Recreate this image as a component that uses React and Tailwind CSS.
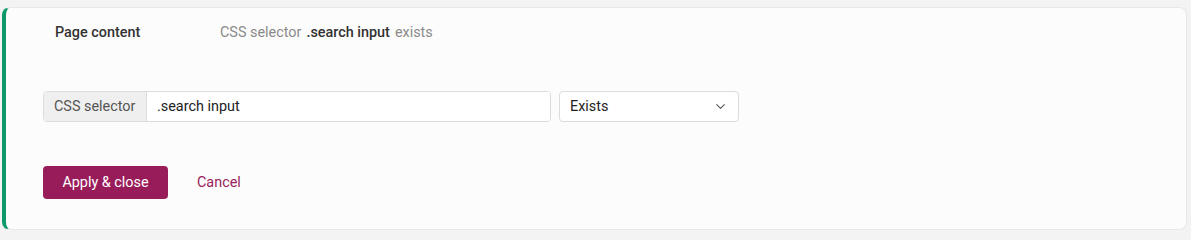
import { ChevronDown } from 'lucide-react';

export default function App() {
  return (
    <div className="min-h-screen bg-[#f3f3f3] pt-[7px] pl-[2px] pr-[4px] font-['Roboto',sans-serif] text-[14.4px]">
      <div className="h-[223px] rounded-lg border border-[#e8e8e8] border-l-4 border-l-[#0d9a68] bg-[#fcfcfc] pl-[37px] pt-[15px]">
        <div className="flex h-[20px] items-center pl-[12px] leading-5">
          <span className="w-[165px] font-medium text-[#333]">Page content</span>
          <span className="text-[#8a8a8a]">CSS selector</span>
          <span className="ml-[5px] font-medium text-[#333]">.search input</span>
          <span className="ml-[5px] text-[#8a8a8a]">exists</span>
        </div>

        <div className="mt-[48px] flex items-center gap-[8px]">
          <div className="flex h-[31px] w-[508px] overflow-hidden rounded border border-[#dcdcdc]">
            <span className="flex w-[103px] items-center border-r border-[#dcdcdc] bg-[#efefef] pl-[10px] text-[#555]">
              CSS selector
            </span>
            <span className="flex flex-1 items-center bg-white pl-[10px] text-[#222]">.search input</span>
          </div>
          <div className="flex h-[31px] w-[180px] items-center justify-between rounded border border-[#dcdcdc] bg-white pl-[10px] pr-[10px] text-[#222]">
            <span>Exists</span>
            <ChevronDown size={15} strokeWidth={1.75} className="text-[#555]" />
          </div>
        </div>

        <div className="mt-[44px] flex items-center">
          <button className="h-[33px] w-[125px] rounded bg-[#991c5a] text-white">Apply &amp; close</button>
          <button className="ml-[29px] text-[#991c5a]">Cancel</button>
        </div>
      </div>
    </div>
  );
}
